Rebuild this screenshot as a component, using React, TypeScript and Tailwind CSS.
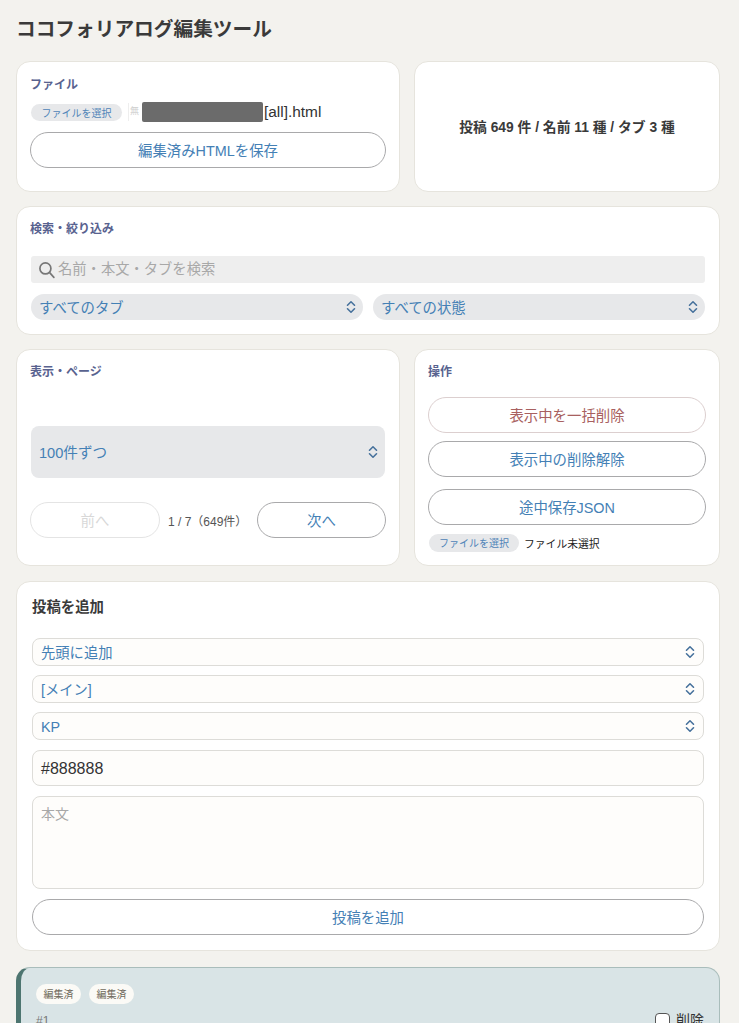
const FONT = "font-['Liberation_Sans','Noto_Sans_CJK_JP',sans-serif]";

function Chevrons({ size = 12 }: { size?: number }) {
  return (
    <svg width={size} height={size + 2} viewBox="0 0 12 14" fill="none" stroke="#46719c" strokeWidth="1.6" strokeLinecap="round" strokeLinejoin="round" className="shrink-0">
      <path d="M2.5 5.2 6 1.8l3.5 3.4" />
      <path d="M2.5 8.8 6 12.2l3.5-3.4" />
    </svg>
  );
}

function Label({ children }: { children: React.ReactNode }) {
  return <div className="text-[12px] leading-[16px] font-bold text-[#58628f]">{children}</div>;
}

function Pill({ children, className = "" }: { children: React.ReactNode; className?: string }) {
  return (
    <button className={`flex items-center justify-center h-[36px] pt-[3px] rounded-full border border-[#a9a9ab] bg-white text-[14.4px] text-[#4480b5] ${className}`}>
      {children}
    </button>
  );
}

function Chip({ w }: { w: string }) {
  return (
    <span className={`flex items-center justify-center h-[17px] pt-[2px] rounded-full bg-[#e7e8ea] text-[10px] text-[#4f84b8] shrink-0 ${w}`}>
      ファイルを選択
    </span>
  );
}

function FormSelect({ children }: { children: React.ReactNode }) {
  return (
    <div className="flex items-center justify-between h-[28px] pl-2 pr-[7px] rounded-lg border border-[#dddcd8] bg-[#fefdfb] text-[14.3px] text-[#4480b5]">
      <span className="pt-[3px]">{children}</span>
      <Chevrons />
    </div>
  );
}

const card = "bg-white rounded-[14px] border border-[#e6e4dd]";

export default function App() {
  return (
    <div className={`h-screen overflow-hidden bg-[#f3f2ee] pl-4 text-[#333] ${FONT}`}>
      <h1 className="pt-[16px] h-[61px] text-[19.7px] leading-[26px] font-bold text-[#3a3a3a]">ココフォリアログ編集ツール</h1>

      <div className="w-[704px] flex flex-col">
        <div className="grid grid-cols-[384px_306px] gap-[14px]">
          <section className={`${card} h-[131px] pt-[15px] pl-[13px] pr-[13px]`}>
            <Label>ファイル</Label>
            <div className="flex items-center h-[20px] mt-[9px]">
              <Chip w="w-[91px] ml-[1px]" />
              <span className="ml-[6px] h-[18px] w-[1px] bg-[#eeeeee]" />
              <span className="ml-[1px] w-[12px] text-[9px] text-[#d0d0d0]">無</span>
              <span className="h-[20px] w-[121px] rounded-[2px] bg-[#6b6b6b]" />
              <span className="ml-[1px] text-[15.4px] text-[#333]">[all].html</span>
            </div>
            <Pill className="w-[356px] mt-[10px]">編集済みHTMLを保存</Pill>
          </section>

          <section className={`${card} h-[131px] pt-[3px] flex items-center justify-center text-[13.8px] font-bold text-[#3a3a3a]`}>
            投稿 649 件 / 名前 11 種 / タブ 3 種
          </section>
        </div>

        <section className={`${card} mt-[14px] h-[129px] pt-[14px] px-[13px]`}>
          <Label>検索・絞り込み</Label>
          <div className="mt-[19px] mx-[1px] flex items-center h-[27px] rounded-[3px] bg-[#eeeeee] pl-[7px] text-[14.3px] text-[#a8a8a8]">
            <svg width="18" height="18" viewBox="0 0 17 17" fill="none" stroke="#777" strokeWidth="1.6" strokeLinecap="round" className="mr-[2px]">
              <circle cx="7" cy="7" r="5.2" />
              <path d="m11 11 4 4.4" />
            </svg>
            名前・本文・タブを検索
          </div>
          <div className="mt-[11px] mx-[1px] grid grid-cols-2 gap-[10px]">
            <div className="flex items-center justify-between h-[26px] rounded-full bg-[#e7e8ea] pl-[8px] pr-[6px] text-[14.4px] text-[#4480b5]">
              <span className="pt-[3px]">すべてのタブ</span>
              <Chevrons />
            </div>
            <div className="flex items-center justify-between h-[26px] rounded-full bg-[#e7e8ea] pl-[8px] pr-[6px] text-[14.4px] text-[#4480b5]">
              <span className="pt-[3px]">すべての状態</span>
              <Chevrons />
            </div>
          </div>
        </section>

        <div className="mt-[14px] grid grid-cols-[384px_306px] gap-[14px]">
          <section className={`${card} h-[217px] pt-[14px] pl-[13px] pr-[13px]`}>
            <Label>表示・ページ</Label>
            <div className="ml-[1px] w-[354px] mt-[46px] flex items-center justify-between h-[52px] rounded-lg bg-[#e7e8ea] pl-[8px] pr-[6px] text-[14.6px] text-[#4480b5]">
              <span className="pt-[3px]">100件ずつ</span>
              <Chevrons />
            </div>
            <div className="mt-[24px] flex items-center w-[356px]">
              <button className="flex items-center justify-center w-[130px] h-[36px] pt-[3px] rounded-full border border-[#e4e4e4] bg-white text-[14.4px] text-[#d8d8d8]">前へ</button>
              <span className="ml-[8px] w-[89px] pt-[3px] text-[12px] text-[#555] whitespace-nowrap">1 / 7（649件）</span>
              <Pill className="w-[129px]">次へ</Pill>
            </div>
          </section>

          <section className={`${card} h-[217px] pt-[14px] pl-[13px] pr-[13px]`}>
            <Label>操作</Label>
            <Pill className="w-[278px] mt-[17px] !border-[#dccfcf] !text-[#a86060]">表示中を一括削除</Pill>
            <Pill className="w-[278px] mt-[8px]">表示中の削除解除</Pill>
            <Pill className="w-[278px] mt-[12px]">途中保存JSON</Pill>
            <div className="mt-[8px] flex items-center">
              <span className="ml-[1px] flex items-center justify-center w-[90px] h-[18px] pt-[1px] rounded-full bg-[#e7e8ea] text-[10px] text-[#4f84b8]">ファイルを選択</span>
              <span className="ml-[5px] pt-[3px] text-[10.8px] text-[#222]">ファイル未選択</span>
            </div>
          </section>
        </div>

        <section className={`${card} mt-[15px] h-[370px] pt-[15px] px-[15px]`}>
          <div className="text-[14.4px] leading-[20px] font-bold text-[#3a3a3a]">投稿を追加</div>
          <div className="mt-[21px] flex flex-col gap-[9px]">
            <FormSelect>先頭に追加</FormSelect>
            <FormSelect>[メイン]</FormSelect>
            <FormSelect>KP</FormSelect>
          </div>
          <div className="mt-[10px] flex items-center h-[36px] pl-2 pt-[2px] rounded-lg border border-[#dddcd8] bg-[#fefdfb] text-[16px] text-[#333]">#888888</div>
          <div className="mt-[10px] h-[93px] pl-2 pt-[8px] rounded-lg border border-[#dddcd8] bg-[#fefdfb] text-[14px] leading-[18px] text-[#a8a8a8]">本文</div>
          <Pill className="w-full mt-[10px]">投稿を追加</Pill>
        </section>

        <section className="mt-[16px] h-[120px] rounded-[14px] border border-[#a9bdbb] border-l-[5px] border-l-[#4d7570] bg-[#d9e4e6] pt-[16px] pl-[15px] pr-[15px]">
          <div className="flex gap-[8px]">
            <span className="flex items-center justify-center w-[45px] h-[20px] rounded-full bg-[#fbfaf6] text-[10px] text-[#6f6a5c]">編集済</span>
            <span className="flex items-center justify-center w-[45px] h-[20px] rounded-full bg-[#fbfaf6] text-[10px] text-[#6f6a5c]">編集済</span>
          </div>
          <div className="mt-[6px] flex items-center justify-between">
            <span className="text-[12px] text-[#777]">#1</span>
            <span className="flex items-center gap-[6px] text-[14px] text-[#333]">
              <span className="w-[15px] h-[15px] rounded-[4px] border border-[#555] bg-white" />
              削除
            </span>
          </div>
        </section>
      </div>
    </div>
  );
}
